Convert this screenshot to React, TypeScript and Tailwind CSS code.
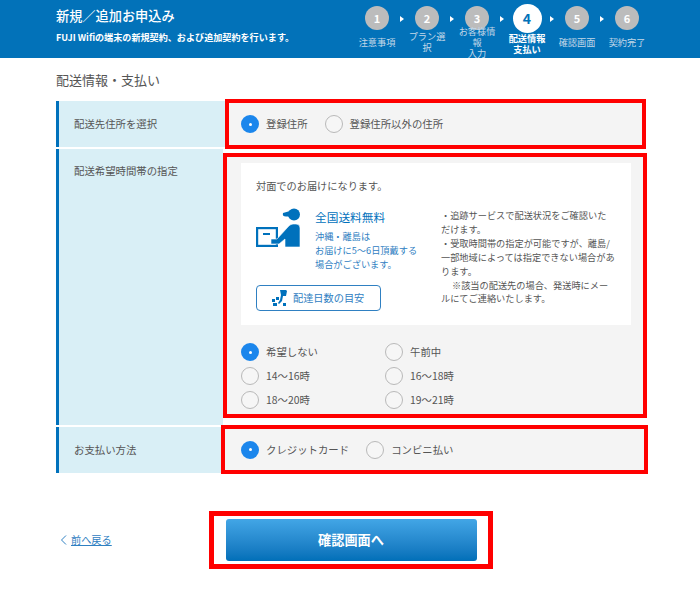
import React from "react";

const font = { fontFamily: '"Noto Sans CJK JP", "Noto Sans", sans-serif' };

const steps = [
  { num: 1, label: "注意事項" },
  { num: 2, label: "プラン選択" },
  { num: 3, label: "お客様情報\n入力" },
  { num: 4, label: "配送情報\n支払い", active: true },
  { num: 5, label: "確認画面" },
  { num: 6, label: "契約完了" },
];

const Radio = ({ label, checked = false }: { label: string; checked?: boolean }) => (
  <div className="flex items-center gap-[7px]">
    {checked ? (
      <span className="flex h-[18px] w-[18px] shrink-0 items-center justify-center rounded-full bg-[#1b86ec]">
        <span className="h-[3px] w-[3px] rounded-full bg-white" />
      </span>
    ) : (
      <span className="h-[18px] w-[18px] shrink-0 rounded-full border border-[#b9b9b9] bg-[#f6f6f6]" />
    )}
    <span className="text-[10.4px] leading-[18px] text-[#555]">{label}</span>
  </div>
);

const DeliveryIcon = () => (
  <svg width="44" height="40" viewBox="0 0 44 40" className="shrink-0">
    <rect x="1.1" y="20.1" width="19.8" height="17.8" fill="#fff" stroke="#0071bc" strokeWidth="2.2" />
    <rect x="7" y="25" width="7" height="2" fill="#0071bc" />
    <circle cx="38" cy="6.5" r="6" fill="#0071bc" />
    <path d="M34 3 L27 5 Q26 8.5 30 8.5 L34 8.5 Z" fill="#0071bc" />
    <path
      d="M37 16 h3 a4 4 0 0 1 4 4 V39 H29 V31 L23 36 H15 v-5 h6 L31 20 Q34 16 37 16 Z"
      fill="#0071bc"
      stroke="#fff"
      strokeWidth="0.6"
    />
  </svg>
);

const DollyIcon = () => (
  <svg width="15" height="16" viewBox="0 0 15 16" className="shrink-0">
    <path d="M8 0 h6 l1 1 -1 5 h-3 l-1 5 -3 3 -1 -1 2 -3 1 -5 Z" fill="#0071bc" />
    <rect x="0" y="9" width="3" height="3" fill="#0071bc" />
    <rect x="4" y="7" width="3" height="3" fill="#0071bc" />
    <rect x="1" y="13" width="4" height="3" fill="#0071bc" />
    <rect x="11" y="13" width="3" height="3" fill="#0071bc" />
  </svg>
);

export default function App() {
  return (
    <div className="min-h-[589px] bg-white" style={font}>
      {/* Header */}
      <header className="flex h-[58px] overflow-hidden bg-[#0272b9] pl-[56px] pr-[48px]">
        <div className="pt-[6px] text-white">
          <h1 className="text-[13.2px] font-medium leading-[20px]">新規／追加お申込み</h1>
          <p className="mt-[5px] text-[9.1px] font-bold leading-[12px]">
            FUJI Wifiの端末の新規契約、および追加契約を行います。
          </p>
        </div>
        <ol className="ml-auto flex">
          {steps.map((step, index) => (
            <li key={step.num} className="relative flex w-[50px] flex-col items-center">
              <div className="flex h-[36px] items-center justify-center">
                {step.active ? (
                  <span className="flex h-[29px] w-[29px] items-center justify-center rounded-full bg-white text-[14px] font-bold text-[#0272b9]">
                    {step.num}
                  </span>
                ) : (
                  <span className="flex h-[24px] w-[24px] items-center justify-center rounded-full bg-[#bcbcbc] text-[11px] font-bold text-white">
                    {step.num}
                  </span>
                )}
              </div>
              <div className="-mt-[5px] flex h-[22px] w-[40px] items-center justify-center">
                <span
                  className={
                    step.active
                      ? "mt-[3px] whitespace-pre-line text-center text-[9.2px] font-bold leading-[11px] text-white"
                      : "whitespace-pre-wrap text-center text-[9.2px] leading-[11px] text-[#c4d8e8]"
                  }
                >
                  {step.label}
                </span>
              </div>
              {index < steps.length - 1 && (
                <span className="absolute right-[-2px] top-[16px] h-0 w-0 border-y-[3.5px] border-l-[4px] border-y-transparent border-l-white" />
              )}
            </li>
          ))}
        </ol>
      </header>

      <main className="px-[56px]">
        <h2 className="pt-[13px] text-[13px] leading-[18px] text-[#555]">配送情報・支払い</h2>

        <div className="mt-[12px] w-[592px]">
          {/* Address */}
          <div className="flex h-[46px]">
            <div className="flex w-[169px] shrink-0 items-center border-l-[3px] border-[#0071bc] bg-[#d9eff6] pl-[15px] text-[10.4px] text-[#555]">
              配送先住所を選択
            </div>
            <div className="-mt-[2px] flex h-[50px] w-[421px] items-center gap-[17px] border-4 border-[#ff0000] bg-[#f4f4f4] pl-[12px]">
              <Radio label="登録住所" checked />
              <Radio label="登録住所以外の住所" />
            </div>
          </div>

          {/* Delivery time */}
          <div className="mt-[2px] flex h-[276px]">
            <div className="w-[167px] shrink-0 border-l-[3px] border-[#0071bc] bg-[#d9eff6] pl-[15px] pt-[14px] text-[10.4px] leading-[15px] text-[#555]">
              配送希望時間帯の指定
            </div>
            <div className="mt-[4px] flex h-[265px] w-[424px] flex-col border-4 border-[#ff0000] bg-[#f4f4f4] pl-[14px] pr-[12px] pt-[6px]">
              <div className="flex h-[162px] gap-[24px] bg-white pl-[15px]">
                <div className="w-[161px] shrink-0">
                  <p className="pt-[16px] text-[10.2px] leading-[14px] text-[#555]">対面でのお届けになります。</p>
                  <div className="mt-[15px] flex gap-[15px]">
                    <DeliveryIcon />
                    <div className="pt-[1px] text-[#2f80c2]">
                      <p className="text-[11.7px] leading-[16px] text-[#0071bc]">全国送料無料</p>
                      <p className="mt-[4px] whitespace-nowrap text-[9.2px] leading-[14px]">
                        沖縄・離島は
                        <br />
                        お届けに5〜6日頂戴する
                        <br />
                        場合がございます。
                      </p>
                    </div>
                  </div>
                  <div className="mt-[14px] flex h-[26px] w-[125px] items-center gap-[6px] rounded-[4px] border border-[#2f80c2] pl-[15px] text-[10.2px] text-[#2f80c2]">
                    <DollyIcon />
                    配達日数の目安
                  </div>
                </div>
                <p className="mt-[46px] whitespace-nowrap text-[9.2px] leading-[13.9px] text-[#555]">
                  ・追跡サービスで配送状況をご確認いた
                  <br />
                  だけます。
                  <br />
                  ・受取時間帯の指定が可能ですが、離島/
                  <br />
                  一部地域によっては指定できない場合があ
                  <br />
                  ります。
                  <br />
                  <span className="pl-[11px]">※該当の配送先の場合、発送時にメー</span>
                  <br />
                  ルにてご連絡いたします。
                </p>
              </div>
              <div className="mt-[18px] grid grid-cols-[144px_1fr] gap-y-[6px]">
                <Radio label="希望しない" checked />
                <Radio label="午前中" />
                <Radio label="14〜16時" />
                <Radio label="16〜18時" />
                <Radio label="18〜20時" />
                <Radio label="19〜21時" />
              </div>
            </div>
          </div>

          {/* Payment */}
          <div className="mt-[2px] flex h-[46px]">
            <div className="flex w-[165px] shrink-0 items-center border-l-[3px] border-[#0071bc] bg-[#d9eff6] pl-[15px] text-[10.4px] text-[#555]">
              お支払い方法
            </div>
            <div className="-mt-[2px] flex h-[49px] w-[427px] items-center gap-[17px] border-4 border-[#ff0000] bg-[#f4f4f4] pl-[16px]">
              <Radio label="クレジットカード" checked />
              <Radio label="コンビニ払い" />
            </div>
          </div>
        </div>

        {/* Actions */}
        <div className="mt-[38px] flex items-center">
          <a className="ml-[4px] flex w-[149px] items-center gap-[4px] text-[10.2px] text-[#2f80c2]">
            <svg width="7" height="10" viewBox="0 0 7 10">
              <path d="M6 0.5 L1.5 5 L6 9.5" fill="none" stroke="#2f80c2" strokeWidth="1" />
            </svg>
            <span className="underline">前へ戻る</span>
          </a>
          <div className="flex h-[58px] w-[284px] items-center justify-center border-[5px] border-[#ff0000]">
            <button className="h-[42px] w-[251px] rounded-[3px] bg-gradient-to-b from-[#42a6e6] to-[#006fb8] text-[13.2px] font-bold text-white">
              確認画面へ
            </button>
          </div>
        </div>
      </main>
    </div>
  );
}
